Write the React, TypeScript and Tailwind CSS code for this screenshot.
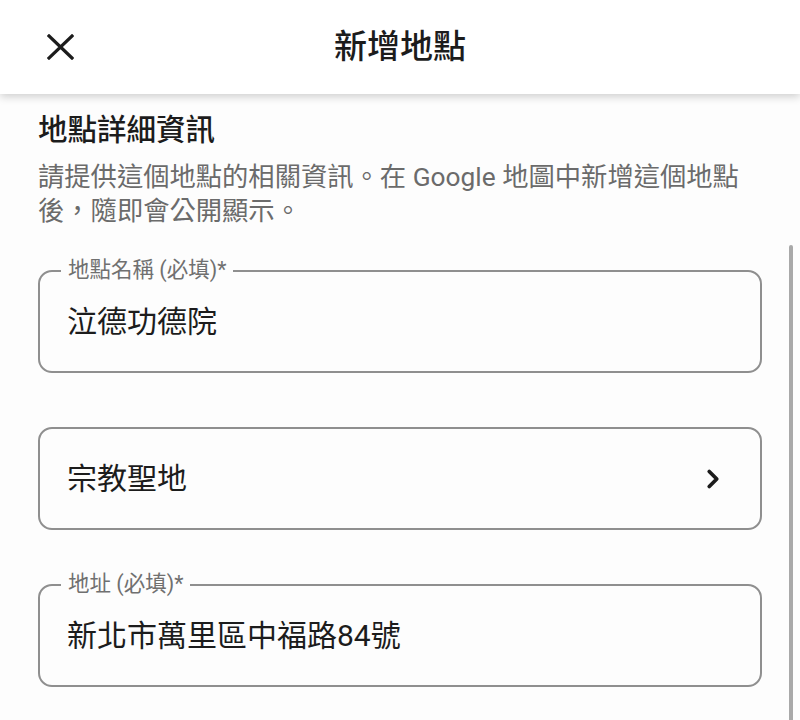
import { ChevronRight } from "lucide-react";

const font = { fontFamily: 'Roboto, "Noto Sans CJK TC", sans-serif' };

type FieldProps = {
  label?: string;
  value: string;
  chevron?: boolean;
};

function Field({ label, value, chevron }: FieldProps) {
  return (
    <div className="relative flex h-[103px] items-center justify-between rounded-[14px] border-2 border-[#8f8f8f] pl-[27px] pr-[32px]">
      {label && (
        <span className="absolute left-[21px] top-[-15px] bg-[#fdfdfd] px-[7px] text-[21.5px] leading-[26px] text-[#707070]">
          {label}
        </span>
      )}
      <span className="text-[30px] leading-[36px] text-[#1c1c1c]">{value}</span>
      {chevron && <ChevronRight className="h-[30px] w-[30px] text-[#1c1c1c]" strokeWidth={3} />}
    </div>
  );
}

export default function App() {
  return (
    <div className="relative h-[720px] w-[800px] overflow-hidden bg-[#fdfdfd]" style={font}>
      <header className="relative z-10 flex h-[94px] items-center bg-white shadow-[0_3px_8px_rgba(0,0,0,0.18)]">
        <button className="ml-[46px] flex h-[28px] w-[28px] items-center justify-center text-[#1c1c1c]">
          <svg width="27" height="26" viewBox="0 0 27 26" fill="none" stroke="currentColor" strokeWidth="3.2" strokeLinecap="square">
            <path d="M2 2L25 24M25 2L2 24" />
          </svg>
        </button>
        <h1 className="pointer-events-none absolute left-0 right-0 text-center text-[33px] font-medium leading-[40px] text-[#1c1c1c]">
          新增地點
        </h1>
      </header>

      <main className="px-[38px]">
        <h2 className="pt-[18px] text-[29.5px] font-medium leading-[36px] text-[#1c1c1c]">地點詳細資訊</h2>
        <p className="mt-[12px] text-[26.3px] leading-[34px] text-[#6b6b6b]">
          請提供這個地點的相關資訊。在 Google 地圖中新增這個地點後，隨即會公開顯示。
        </p>

        <div className="mt-[42px] flex flex-col gap-[54px]">
          <Field label="地點名稱 (必填)*" value="泣德功德院" />
          <Field value="宗教聖地" chevron />
          <Field label="地址 (必填)*" value="新北市萬里區中福路84號" />
        </div>
      </main>

      <div className="absolute right-[7px] top-[245px] h-[490px] w-[4px] rounded-full bg-[#a9a9a9]" />
    </div>
  );
}
